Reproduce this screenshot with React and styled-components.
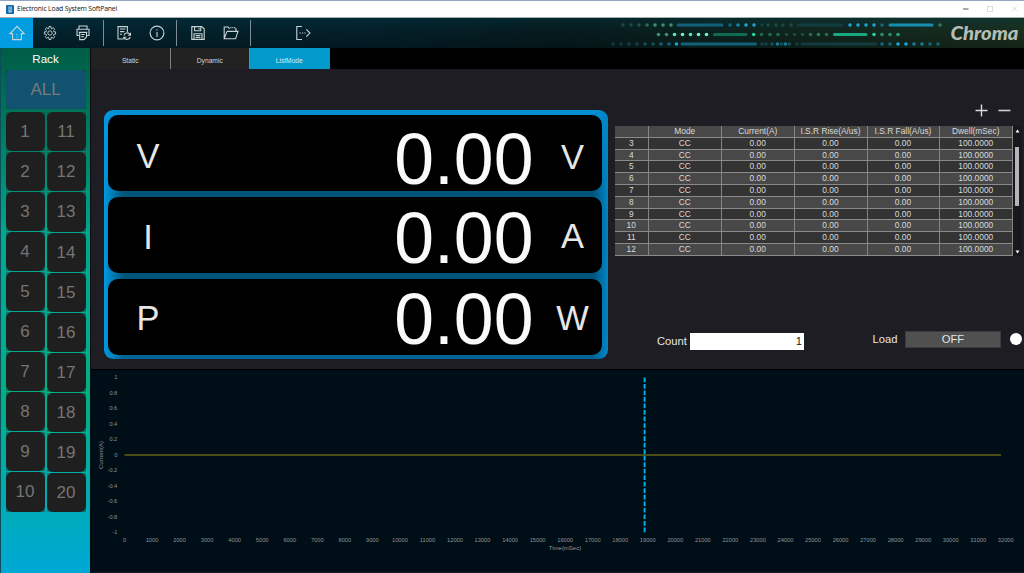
import { Fragment } from 'react';
import styled, { createGlobalStyle } from 'styled-components';

const readouts = [
    { label: "V", value: "0.00", unit: "V", labelDrop: 3, valueDrop: 6, unitDrop: 4.5 },
    { label: "I", value: "0.00", unit: "A", labelDrop: 2, valueDrop: 3.5, unitDrop: 1 },
    { label: "P", value: "0.00", unit: "W", labelDrop: 1.5, valueDrop: 2.5, unitDrop: 1 },
];

const columns = ["", "Mode", "Current(A)", "I.S.R Rise(A/us)", "I.S.R Fall(A/us)", "Dwell(mSec)"];

const steps = [3, 4, 5, 6, 7, 8, 9, 10, 11, 12].map((no) => [no, "CC", "0.00", "0.00", "0.00", "100.0000"]);

const tabs = ["Static", "Dynamic", "ListMode"];

const leftRack = Array.from({ length: 10 }, (_, i) => i + 1);
const rightRack = leftRack.map((n) => n + 10);

// toolbar decoration: [x, colour] dots and [x1, x2, colour] bars for each line
const decoLines = [
    {
        y: 7,
        dots: [
            [23, "#1d4a3d"], [31, "#1d4a3d"], [39, "#22553f"], [47, "#2a6b4e"], [55, "#37936f"], [63, "#37936f"], [71, "#37936f"],
            [130, "#12657f"], [138, "#1787aa"], [146, "#1ba5d6"], [154, "#1fa0c8"], [162, "#12414a"], [168, "#1d4a3d"],
            [176, "#1d4a3d"], [183, "#1d4a3d"], [191, "#1d4a3d"],
            [250, "#1ba5d6"], [258, "#1ba5d6"], [266, "#1ba5d6"], [274, "#1ba5d6"], [282, "#126a80"], [340, "#357a5c"],
        ],
        bars: [[78, 122, "#126079"], [198, 242, "#123c40"], [290, 332, "#168fb0"]],
    },
    {
        y: 16.5,
        dots: [
            [58.5, "#37936f"], [66.5, "#37936f"], [74.5, "#5de5b2"], [82.5, "#6cf5c2"], [90.5, "#5de5b2"], [98.5, "#6cf5c2"], [106.5, "#6cf5c2"],
            [153.7, "#22d39a"], [161.5, "#1f6b50"], [170, "#1f6b50"], [178, "#1f6b50"], [186.5, "#1d4a3d"], [194.5, "#1d4a3d"], [202.5, "#1d4a3d"],
            [210.5, "#2a6b4e"], [218.5, "#2a7a57"], [226.5, "#2a6b4e"],
            [274, "#22d39a"], [282, "#2a9068"], [290, "#2a9068"], [298, "#2aa575"],
        ],
        bars: [[114.5, 146, "#116b50"], [234.5, 266, "#17a880"]],
    },
    {
        y: 26,
        dots: [
            [13, "#113a40"], [21, "#113a40"], [29, "#123f48"], [37, "#123f48"], [45, "#12505c"], [53, "#12505c"], [61, "#126079"], [69, "#126079"], [76.5, "#1ba5d6"],
            [162, "#12414a"], [166, "#12414a"], [172, "#12505c"], [177.5, "#177c9c"], [181.5, "#12505c"], [185.5, "#177c9c"], [189.5, "#12505c"], [197, "#123c40"],
            [282, "#126a80"], [290, "#12657f"], [298, "#1ba5d6"], [306, "#1ba5d6"], [314, "#177c9c"], [322, "#177c9c"], [330, "#12657f"], [338, "#12657f"],
        ],
        bars: [[82, 155.5, "#126079"], [202, 276, "#123c40"]],
    },
];

const gearPath = () => {
    const points = [];
    for (let i = 0; i < 8; i++) {
        const a = (i * Math.PI) / 4;
        [[-0.27, 4.7], [-0.18, 6.6], [0.18, 6.6], [0.27, 4.7]].forEach(([d, r]) => {
            points.push(`${(8 + Math.sin(a + d) * r * 0.86).toFixed(2)} ${(8 - Math.cos(a + d) * r).toFixed(2)}`);
        });
    }
    return `M${points.join("L")}Z`;
};

const icons = {
    home: (
        <>
            <path d="M1 8.6 8 1.3l7 7.3h-2.6v6H3.6v-6Z" />
            <path d="M8 9v1M8 11.6v1" />
        </>
    ),
    gear: (
        <>
            <path d={gearPath()} strokeWidth="0.9" />
            <circle cx="8" cy="8" r="2.2" strokeWidth="0.9" />
        </>
    ),
    print: (
        <>
            <path d="M4 4V1h8v3M4 10.5H2V4.3h12v6.2h-2M3.6 7.3h8.8" />
            <path d="M4.7 7.5h6.8V12l-2.6 2.6H4.7ZM6.3 9.5h3.4M6.3 11.6h2.4" />
        </>
    ),
    report: (
        <>
            <path d="M7 14H2V1.6h9.4V7M4 4h5.4M4 6.6h4.4M4 9.2h2" />
            <path d="M8 10.5a3.2 3.2 0 0 1 5.6-1.4l.8 1M14.5 7.8v2.5h-2.4M14.2 12a3.2 3.2 0 0 1-5.5 1.3l-.8-.9M7.8 14.6v-2.4h2.4" />
        </>
    ),
    info: (
        <>
            <circle cx="8" cy="8" r="6.9" />
            <path d="M8 4.2v1.4M8 7v5" />
        </>
    ),
    save: (
        <>
            <path d="M1.8 1.6h9.8l2.6 2.2v10.6H1.8Z" />
            <path d="M4.6 1.6v4.2h6.2V1.6M4 14.4V8.8h8v5.6M5.6 10.6h4.8M5.6 12.5h4.8M9 3v1.4" />
        </>
    ),
    open: (
        <>
            <path d="M1.2 13.8V2h4l1.4 1.8M13 6V3.8h-1M4 6.4h11l-2.4 7.4H1.2L4 6.4" />
            <path d="M7.5 2.6h5" strokeDasharray="1 0.8" />
        </>
    ),
    exit: (
        <>
            <path d="M7 1.5H1.8v13H7" />
            <path d="M4.6 8h1.2M7 8h1.2M9.4 8h1.2M11.3 4.3 15 8l-3.7 3.7" />
        </>
    ),
};

const ToolIcon = ({ name }) => (
    <svg width="16" height="16" viewBox="0 0 16 16" fill="none" stroke="#c9d3d5" strokeWidth="1.1">
        {icons[name]}
    </svg>
);

const Decoration = () => (
    <svg width="345" height="30" viewBox="0 0 345 30">
        {decoLines.map((line) => (
            <Fragment key={line.y}>
                {line.bars.map(([x1, x2, color]) => (
                    <line key={x1} x1={x1} x2={x2} y1={line.y} y2={line.y} stroke={color} strokeWidth="3" strokeLinecap="round" />
                ))}
                {line.dots.map(([x, color]) => (
                    <circle key={x} cx={x} cy={line.y} r="1.8" fill={color} />
                ))}
            </Fragment>
        ))}
    </svg>
);

const Chart = () => {
    const left = 33.5;
    const zero = 85;
    const yTicks = Array.from({ length: 11 }, (_, i) => (10 - i * 2) / 10);
    const xTicks = Array.from({ length: 33 }, (_, i) => i * 1000);

    return (
        <svg width="933" height="202" viewBox="0 0 933 202">
            {yTicks.map((v) => (
                <Fragment key={v}>
                    <StyledTick x="26.3" y={zero - v * 77.4 + 1.8} textAnchor="end">{v}</StyledTick>
                    <rect x="28" y={zero - v * 77.4 - 0.5} width="2" height="1" fill="#0e161b" />
                </Fragment>
            ))}
            {xTicks.map((v) => (
                <StyledTick key={v} x={left + v * 0.02754} y="171.7" textAnchor="middle">{v}</StyledTick>
            ))}
            <line x1={left} x2="910" y1={zero} y2={zero} stroke="#4b4b14" strokeWidth="2" />
            <line x1="553.6" x2="553.6" y1="7.5" y2="162.2" stroke="#00b4f0" strokeWidth="1.9" strokeDasharray="4.7 1.82" />
            <StyledAxisName x="474" y="180.3" textAnchor="middle">Time(mSec)</StyledAxisName>
            <StyledAxisName transform="translate(12.3 85) rotate(-90)" textAnchor="middle">Current(A)</StyledAxisName>
        </svg>
    );
};

const App = () => {
    return (
        <StyledWindow>
            <GlobalStyle />
            <StyledTitleBar>
                <svg width="8" height="9" viewBox="0 0 8 9">
                    <rect width="8" height="9" rx="0.8" fill="#1769a5" />
                    <path d="M2.4 1.5h3.4v6H2.4Z" fill="#8fc3e6" />
                    <path d="M3 3h2M3 4.6h2" stroke="#1769a5" strokeWidth="0.6" />
                </svg>
                <StyledTitle>Electronic Load System SoftPanel</StyledTitle>
                <svg width="58" height="8" viewBox="0 0 58 8" fill="none" stroke="#d4d4d4" strokeWidth="0.8">
                    <path d="M0 4h5.5" stroke="#555" strokeWidth="1" />
                    <rect x="24.5" y="1.5" width="5" height="5" />
                    <path d="m49 1.3 5 5M54 1.3l-5 5" />
                </svg>
            </StyledTitleBar>

            <StyledToolbar>
                <StyledTool $width={33} $active><ToolIcon name="home" /></StyledTool>
                <StyledTool $width={33}><ToolIcon name="gear" /></StyledTool>
                <StyledTool $width={33}><ToolIcon name="print" /></StyledTool>
                <StyledSeparator $before={4} $after={3} />
                <StyledTool $width={33}><ToolIcon name="report" /></StyledTool>
                <StyledTool $width={33}><ToolIcon name="info" /></StyledTool>
                <StyledSeparator $before={3} $after={4.5} />
                <StyledTool $width={33}><ToolIcon name="save" /></StyledTool>
                <StyledTool $width={33}><ToolIcon name="open" /></StyledTool>
                <StyledSeparator $before={2.5} $after={35} />
                <StyledTool $width={33}><ToolIcon name="exit" /></StyledTool>
                <StyledBrand>
                    <Decoration />
                    <svg width="79" height="30" viewBox="0 0 79 30">
                        <StyledLogo x="5.5" y="22.3" textLength="68" lengthAdjust="spacingAndGlyphs">Chroma</StyledLogo>
                    </svg>
                </StyledBrand>
            </StyledToolbar>

            <StyledBody>
                <StyledSidebar>
                    <StyledRackTitle>Rack</StyledRackTitle>
                    <StyledRackSlot $all>
                        <StyledAllButton>ALL</StyledAllButton>
                    </StyledRackSlot>
                    <StyledRackColumns>
                        {[leftRack, rightRack].map((rack, i) => (
                            <StyledRackColumn key={i} $shift={i * 0.7}>
                                {rack.map((n) => (
                                    <StyledRackSlot key={n}>
                                        <StyledRackButton>{n}</StyledRackButton>
                                    </StyledRackSlot>
                                ))}
                            </StyledRackColumn>
                        ))}
                    </StyledRackColumns>
                </StyledSidebar>

                <StyledMain>
                    <StyledTabs>
                        {tabs.map((tab) => (
                            <StyledTab key={tab} $active={tab === "ListMode"}>{tab}</StyledTab>
                        ))}
                    </StyledTabs>

                    <StyledPanel>
                        <StyledReadouts>
                            {readouts.map((r) => (
                                <StyledReadout key={r.label}>
                                    <StyledSymbol $drop={r.labelDrop}>{r.label}</StyledSymbol>
                                    <StyledValue $drop={r.valueDrop}>{r.value}</StyledValue>
                                    <StyledSymbol $drop={r.unitDrop}>{r.unit}</StyledSymbol>
                                </StyledReadout>
                            ))}
                        </StyledReadouts>

                        <StyledListArea>
                            <StyledListTools>
                                <svg width="13" height="13" viewBox="0 0 13 13"><path d="M6.5 .5v12M.5 6.5h12" stroke="#dcdcdc" strokeWidth="1.4" /></svg>
                                <svg width="13" height="13" viewBox="0 0 13 13"><path d="M.5 6.5h12" stroke="#cfcfcf" strokeWidth="1.6" /></svg>
                            </StyledListTools>

                            <StyledListWrap>
                                <StyledTable>
                                    {columns.map((name) => (
                                        <StyledCell key={name}>{name}</StyledCell>
                                    ))}
                                    {steps.map((step, row) => step.map((cell, i) => (
                                        <StyledCell key={`${row}-${i}`} $dark={row % 2 === 0}>{cell}</StyledCell>
                                    )))}
                                </StyledTable>
                                <StyledScrollbar>
                                    <svg width="5" height="4" viewBox="0 0 5 4"><path d="M2.5 .5 4.5 3.5h-4Z" fill="#fff" /></svg>
                                    <StyledThumb />
                                    <svg width="5" height="4" viewBox="0 0 5 4"><path d="M.5 .5h4l-2 3Z" fill="#fff" /></svg>
                                </StyledScrollbar>
                            </StyledListWrap>

                            <StyledControls>
                                <StyledCount>
                                    Count
                                    <StyledCountBox>1</StyledCountBox>
                                </StyledCount>
                                <StyledLoad>
                                    Load
                                    <StyledLoadButton>OFF</StyledLoadButton>
                                    <StyledLamp />
                                </StyledLoad>
                            </StyledControls>
                        </StyledListArea>
                    </StyledPanel>

                    <StyledChartArea>
                        <Chart />
                    </StyledChartArea>
                </StyledMain>
            </StyledBody>
        </StyledWindow>
    );
};

export default App;

const GlobalStyle = createGlobalStyle`
    * {
        box-sizing: border-box;
    }

    body {
        margin: 0;
        background: #000;
        font-family: "Liberation Sans", Arial, sans-serif;
    }

    svg {
        display: block;
        flex-shrink: 0;
    }
`;

const StyledWindow = styled.div`
    display: flex;
    flex-direction: column;
    width: 1024px;
    height: 573px;
    overflow: hidden;
`;

const StyledTitleBar = styled.div`
    display: flex;
    align-items: center;
    height: 18px;
    padding: 0 3px 0 6px;
    border-top: 1px solid #94a5bf;
    border-bottom: 1px solid #a3b0af;
    background: #fff;
`;

const StyledTitle = styled.div`
    flex: 1;
    margin-left: 3px;
    color: #111;
    font-family: "Open Sans", "Noto Sans", sans-serif;
    font-size: 6.8px;
    letter-spacing: -0.15px;
    line-height: 16px;
`;

const StyledToolbar = styled.div`
    display: flex;
    height: 30px;
    background:
        linear-gradient(180deg, rgba(0, 70, 90, 0.25), rgba(0, 0, 0, 0) 45%, rgba(0, 0, 0, 0.2)),
        linear-gradient(90deg, #02222d 0%, #031f29 35%, #061a1d 55%, #0e231d 75%, #192d1d 100%);
`;

const StyledTool = styled.div`
    display: flex;
    align-items: center;
    justify-content: center;
    width: ${(props) => props.$width}px;
    background: ${(props) => (props.$active ? "#029de0" : "transparent")};
`;

const StyledSeparator = styled.div`
    width: 1px;
    margin: 2px ${(props) => props.$after}px 2px ${(props) => props.$before}px;
    background: #7f8e92;
`;

const StyledBrand = styled.div`
    display: flex;
    margin-left: auto;
`;

const StyledLogo = styled.text`
    fill: #b4beb6;
    font-family: Lato, sans-serif;
    font-size: 18.6px;
    font-style: italic;
    font-weight: 900;
`;

const StyledBody = styled.div`
    display: flex;
    flex: 1;
`;

const StyledSidebar = styled.div`
    width: 90px;
    padding: 0 4.5px 0 4.5px;
    border-left: 1px solid #0c4f5c;
    background: linear-gradient(180deg, #005c46 0%, #007a60 16%, #00a88e 36%, #00ab92 50%, #00b080 66%, #00acaa 82%, #00a8d6 100%);
`;

const StyledRackTitle = styled.div`
    height: 22px;
    color: #fff;
    font-size: 11.6px;
    line-height: 22px;
    text-align: center;
`;

const StyledRackSlot = styled.div`
    height: ${(props) => (props.$all ? 39 : 39.1)}px;
    background: rgba(15, 60, 60, 0.45);
`;

const StyledAllButton = styled.div`
    height: 100%;
    border-radius: 5px;
    background: #11526f;
    color: #7a7a7a;
    font-size: 17px;
    line-height: 39px;
    text-align: center;
`;

const StyledRackColumns = styled.div`
    display: grid;
    grid-template-columns: 1fr 1fr;
    column-gap: 2px;
    margin-top: 2.6px;
`;

const StyledRackColumn = styled.div`
    display: grid;
    grid-auto-rows: 39.1px;
    row-gap: 1px;
    padding-top: ${(props) => props.$shift}px;
`;

const StyledRackButton = styled.div`
    height: 100%;
    border-radius: 6px;
    background: #1f1f1f;
    color: #757575;
    font-size: 17px;
    line-height: 40px;
    text-align: center;
`;

const StyledMain = styled.div`
    display: flex;
    flex-direction: column;
    flex: 1;
    border-left: 1px solid #050a0c;
`;

const StyledTabs = styled.div`
    display: flex;
    height: 21px;
    background: #000;
`;

const StyledTab = styled.div`
    width: 79.5px;
    border-right: 1px solid ${(props) => (props.$active ? "#029acb" : "#808080")};
    background: ${(props) => (props.$active ? "#029acb" : "#222")};
    color: ${(props) => (props.$active ? "#d5edf6" : "#d5d5d5")};
    font-size: 6.7px;
    line-height: 25px;
    text-align: center;
`;

const StyledPanel = styled.div`
    display: flex;
    height: 301px;
    padding: 41px 2px 0 13px;
    border-bottom: 1px solid #000;
    background: #1e1d23;
`;

const StyledReadouts = styled.div`
    display: grid;
    grid-template-rows: repeat(3, 1fr);
    gap: 5.5px;
    width: 504px;
    height: 249px;
    padding: 4.5px 6px 4px 4px;
    border-radius: 9px;
    background:
        linear-gradient(90deg, #0099e0 0%, rgba(0, 153, 224, 0) 4%, rgba(0, 128, 190, 0) 97%, #0086c6 100%),
        linear-gradient(180deg, #008fd6 0%, #00547a 33%, #00547a 66%, #006496 100%);
`;

const StyledReadout = styled.div`
    display: grid;
    grid-template-columns: 80px 1fr 59px;
    align-items: center;
    border-radius: 10px;
    background: #000;
`;

const StyledSymbol = styled.div`
    padding-top: ${(props) => props.$drop * 2}px;
    color: #e6e6e6;
    font-size: 34.5px;
    line-height: 36px;
    text-align: center;
`;

const StyledValue = styled.div`
    padding: ${(props) => props.$drop * 2}px 9.5px 0 0;
    color: #fafafa;
    font-size: 71.6px;
    line-height: 62px;
    text-align: right;
`;

const StyledListArea = styled.div`
    flex: 1;
    margin-left: 7px;
`;

const StyledListTools = styled.div`
    display: flex;
    justify-content: flex-end;
    align-items: center;
    gap: 10.5px;
    height: 1px;
    margin-right: 11px;
`;

const StyledListWrap = styled.div`
    display: flex;
    height: 130px;
    margin-top: 15px;
`;

const StyledTable = styled.div`
    display: grid;
    grid-template-columns: 34px 73px 73px 72.5px 72.5px 73px;
    grid-template-rows: repeat(11, 11.8px);
`;

const StyledCell = styled.div`
    padding-right: 0.5px;
    border-right: 1px solid #858585;
    border-bottom: 1px solid #8a8a8a;
    background: ${(props) => (props.$dark ? "#333" : "#484848")};
    color: #dadada;
    font-size: 8.4px;
    line-height: 10.8px;
    text-align: center;
    white-space: nowrap;
`;

const StyledScrollbar = styled.div`
    display: flex;
    flex-direction: column;
    align-items: center;
    width: 8.6px;
    padding: 3px 0 2px;
    background: #18171c;

    svg:last-child {
        margin-top: auto;
    }
`;

const StyledThumb = styled.div`
    width: 4px;
    height: 59px;
    margin-top: 14px;
    background: #b4b4b4;
`;

const StyledControls = styled.div`
    display: flex;
    align-items: flex-start;
    justify-content: space-between;
    margin-top: 74.5px;
    padding: 0 0.5px 0 42px;
    color: #e6e6e6;
    font-size: 11.2px;
    line-height: 17px;
`;

const StyledCount = styled.div`
    display: flex;
    gap: 3px;
    padding-top: 2.5px;
`;

const StyledCountBox = styled.div`
    width: 114px;
    padding-right: 2px;
    background: #fff;
    color: #222;
    text-align: right;
`;

const StyledLoad = styled.div`
    display: flex;
    align-items: center;
`;

const StyledLoadButton = styled.div`
    width: 96px;
    height: 17.5px;
    margin-left: 7.5px;
    border: 1px solid #3c3c3e;
    background: #505050;
    line-height: 15px;
    text-align: center;
`;

const StyledLamp = styled.div`
    width: 12px;
    height: 12px;
    margin-left: 8.5px;
    border-radius: 50%;
    background: #fff;
`;

const StyledChartArea = styled.div`
    flex: 1;
    background: #000e17;
    border-bottom: 1px solid #101c24;
`;

const StyledTick = styled.text`
    fill: #8d9498;
    font-size: 5.7px;
`;

const StyledAxisName = styled.text`
    fill: #8d9498;
    font-size: 6px;
`;
